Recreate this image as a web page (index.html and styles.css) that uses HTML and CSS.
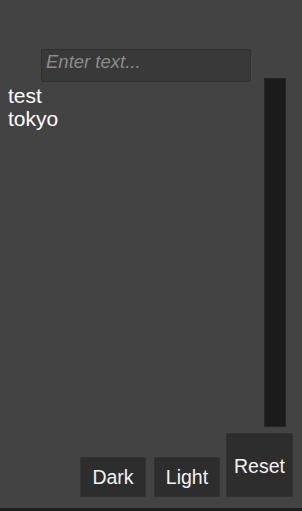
FILE: index.html
```html
<!DOCTYPE html>
<html lang="en">
<head>
  <meta charset="UTF-8">
  <title>Notes</title>
  <meta name="viewport" content="width=device-width, initial-scale=1.0">
  <link rel="stylesheet" href="styles.css">
</head>
<body>

  <div class="app">
    <div class="top">
      <input class="entry" type="text" placeholder="Enter text...">
    </div>

    <div class="main">
      <ul class="items">
        <li>test</li>
        <li>tokyo</li>
      </ul>
      <div class="scrollbar"></div>
    </div>

    <div class="buttons">
      <button class="btn">Dark</button>
      <button class="btn">Light</button>
      <button class="btn reset">Reset</button>
    </div>

    <div class="bottom-bar"></div>
  </div>

</body>
</html>
```

FILE: styles.css
```css
html, body {
  margin: 0;
  height: 100%;
}

body {
  font-family: "Liberation Sans", Arial, sans-serif;
  background-color: #434343;
  color: #fff;
}

.app {
  display: flex;
  flex-direction: column;
  height: 100%;
}

.top {
  height: 78px;
  padding-left: 41px;
  display: flex;
  align-items: flex-end;
}

.entry {
  width: 210px;
  height: 33px;
  margin-bottom: -4px;
  box-sizing: border-box;
  padding: 0 4px 7px;
  background-color: #393939;
  border: 1px solid #2f2f2f;
  border-radius: 2px;
  color: #ddd;
  font-family: inherit;
  font-size: 18.5px;
  font-style: italic;
  outline: none;
  position: relative;
}

.entry::placeholder {
  color: #8c8c8c;
}

.main {
  display: flex;
}

.items {
  list-style: none;
  margin: 0;
  padding: 6px 0 0 8px;
  flex: 1;
  font-size: 21px;
  line-height: 23px;
}

.scrollbar {
  width: 22px;
  height: 349px;
  margin-right: 16px;
  background-color: #1b1b1b;
  border: 1px solid #252525;
  box-sizing: border-box;
}

.buttons {
  display: flex;
  justify-content: flex-end;
  align-items: flex-end;
  padding-right: 9px;
  margin-top: 6px;
  height: 64px;
}

.btn {
  width: 66px;
  height: 40px;
  margin-left: 8px;
  box-sizing: border-box;
  background-color: #2d2d2d;
  border: 1px solid #333;
  color: #f2f2f2;
  font-family: inherit;
  font-size: 19.5px;
  padding: 0;
}

.btn.reset {
  width: 67px;
  height: 64px;
  margin-left: 6px;
  padding-top: 2px;
}

.bottom-bar {
  margin-top: auto;
  height: 3px;
  background-color: #1e1e1e;
}
```
